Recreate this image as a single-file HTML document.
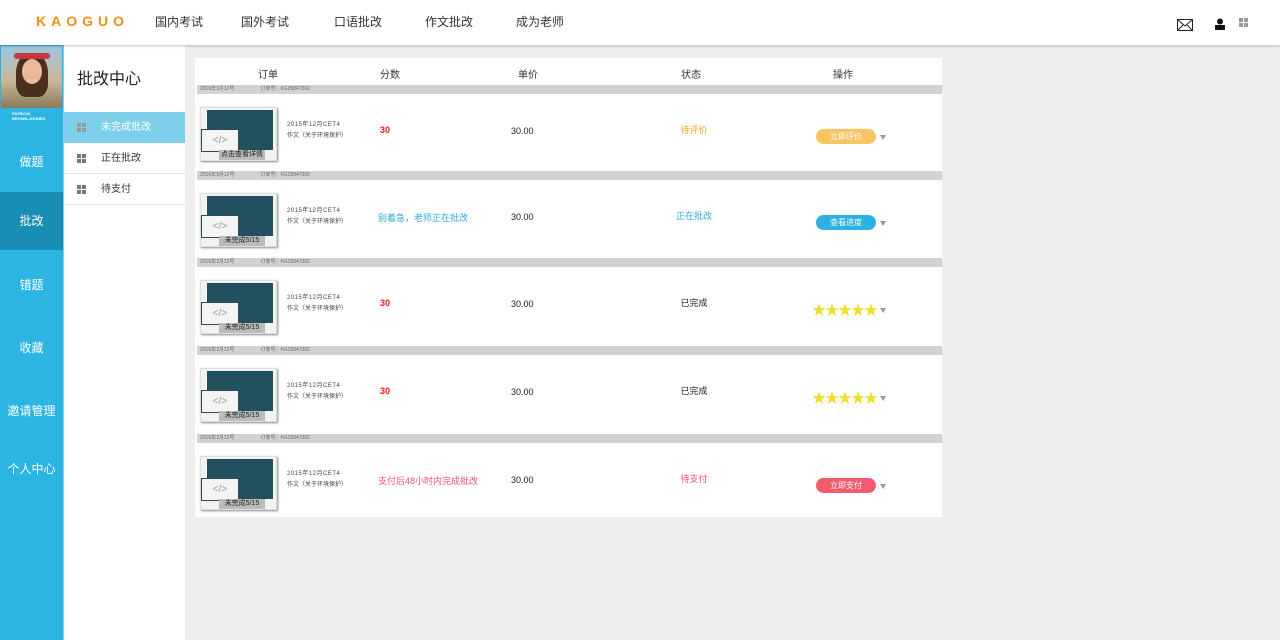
<!DOCTYPE html>
<html><head><meta charset="utf-8"><style>
*{margin:0;padding:0;box-sizing:border-box}
body{width:1280px;height:640px;overflow:hidden;background:#eeeeee;font-family:"Liberation Sans","Noto Sans CJK SC",sans-serif;position:relative;color:#333}
.a{position:absolute}
#hd{left:0;top:0;width:1280px;height:45px;background:#fff;box-shadow:0 1px 3px rgba(0,0,0,.25);z-index:5}
.nav{top:13px;font-size:12px;color:#333}
#sb{left:0;top:45px;width:64px;height:595px;background:#2cb5e3;border-right:1px solid #7fd0ec}
.si{left:0;width:63px;text-align:center;color:#fff;font-size:12px}
#sb2{left:64px;top:45px;width:121px;height:595px;background:#fff}
.s2{left:0;width:121px;height:31px;border-bottom:1px solid #e3e3e3;font-size:10px;color:#333;line-height:31px;padding-left:37px}
.gi{position:absolute;left:13px;top:11px;width:10px;height:10px}
.gi i{position:absolute;width:4px;height:4px;background:#999}
#tb{left:195px;top:58px;width:747px;height:459px;background:#fff}
.th{top:66px;font-size:10px;color:#333}
.strip{left:197px;width:745px;height:9px;background:#d2d2d2;font-size:5px;color:#666;line-height:9px}
.row{left:197px;width:745px;height:72px;background:#fff}
.thumb{position:absolute;left:3px;top:12px;width:77px;height:54px;background:#f2f2f2;box-shadow:1px 1px 2px #888;border:1px solid #ddd}
.scr{position:absolute;left:6px;top:2px;width:66px;height:40px;background:#23505f}
.code{position:absolute;left:0;top:21px;width:38px;height:23px;background:#f4f4f4;border:1px solid #2a4a55;color:#999;font-size:10px;text-align:center;line-height:21px}
.lbl{position:absolute;left:18px;top:42px;width:46px;height:10px;background:#bbb;font-size:7px;text-align:center;line-height:10px;color:#222}
.t1{position:absolute;left:90px;top:24px;font-size:6px;color:#444;letter-spacing:.5px}
.t2{position:absolute;left:90px;top:35px;font-size:6px;color:#444}
.sc{position:absolute;top:30px;font-size:9px}
.pr{position:absolute;left:314px;top:31px;font-size:9px;color:#222}
.st{position:absolute;top:28px;font-size:9px;width:80px;text-align:center;left:457px}
.btn{position:absolute;left:619px;top:34px;width:60px;height:15px;border-radius:8px;color:#fff;font-size:8px;text-align:center;line-height:15px}
.tri{position:absolute;left:683px;top:40px;width:0;height:0;border-left:3px solid transparent;border-right:3px solid transparent;border-top:5px solid #999}
.stars{position:absolute;left:615px;top:32px;color:#ede02a;font-size:14px;letter-spacing:-1px}
</style></head><body>
<div id="hd" class="a">
<div class="a" style="left:36px;top:13px;font-size:14px;font-weight:bold;color:#f0900e;letter-spacing:5px">KAOGUO</div>
<div class="a nav" style="left:155px">国内考试</div>
<div class="a nav" style="left:241px">国外考试</div>
<div class="a nav" style="left:334px">口语批改</div>
<div class="a nav" style="left:425px">作文批改</div>
<div class="a nav" style="left:516px">成为老师</div>
<svg class="a" style="left:1177px;top:19px" width="16" height="12"><rect x="0.5" y="0.5" width="15" height="11" fill="none" stroke="#222"/><path d="M1 1L8 7L15 1M1 11L6 6M15 11L10 6" stroke="#222" fill="none"/></svg>
<svg class="a" style="left:1214px;top:18px" width="12" height="12"><circle cx="6" cy="3.5" r="3" fill="#111"/><rect x="1" y="7" width="10" height="5" fill="#111"/></svg>
<div class="a" style="left:1239px;top:18px;width:10px;height:10px"><i class="a" style="left:0;top:0;width:4px;height:4px;background:#999"></i><i class="a" style="left:5px;top:0;width:4px;height:4px;background:#999"></i><i class="a" style="left:0;top:5px;width:4px;height:4px;background:#999"></i><i class="a" style="left:5px;top:5px;width:4px;height:4px;background:#999"></i></div>
</div>
<div id="sb" class="a">
<div class="a" style="left:1px;top:1px;width:61px;height:62px;background:linear-gradient(180deg,#9cc6e0 0%,#c9b89a 55%,#8c7a5a 100%)"></div>
<div class="a" style="left:16px;top:8px;width:32px;height:44px;border-radius:45% 45% 30% 30%;background:#4a2e1e"></div>
<div class="a" style="left:22px;top:14px;width:20px;height:25px;border-radius:50%;background:#e9b99a"></div>
<div class="a" style="left:14px;top:8px;width:36px;height:6px;border-radius:4px;background:#c23a3a"></div>
<div class="a" style="left:12px;top:66px;font-size:4px;color:#fff;font-weight:bold;line-height:5px">PATRICIA<br>BROWN-JOHNES</div>
<div class="a si" style="top:108px">做题</div>
<div class="a si" style="top:147px;height:58px;background:#1a8fb6;line-height:58px">批改</div>
<div class="a si" style="top:231px">错题</div>
<div class="a si" style="top:294px">收藏</div>
<div class="a si" style="top:357px">邀请管理</div>
<div class="a si" style="top:415px">个人中心</div>
</div>
<div id="sb2" class="a">
<div class="a" style="left:13px;top:20px;font-size:16px;color:#222">批改中心</div>
<div class="a s2" style="top:67px;background:#7ecfeb;color:#fff;border-bottom:none"><span class="gi"><i style="left:0;top:0"></i><i style="left:5px;top:0"></i><i style="left:0;top:5px"></i><i style="left:5px;top:5px"></i></span>未完成批改</div>
<div class="a s2" style="top:98px"><span class="gi"><i style="left:0;top:0;background:#777"></i><i style="left:5px;top:0;background:#777"></i><i style="left:0;top:5px;background:#777"></i><i style="left:5px;top:5px;background:#777"></i></span>正在批改</div>
<div class="a s2" style="top:129px"><span class="gi"><i style="left:0;top:0;background:#777"></i><i style="left:5px;top:0;background:#777"></i><i style="left:0;top:5px;background:#777"></i><i style="left:5px;top:5px;background:#777"></i></span>待支付</div>
</div>
<div id="tb" class="a"></div>
<div class="a th" style="left:258px">订单</div>
<div class="a th" style="left:380px">分数</div>
<div class="a th" style="left:518px">单价</div>
<div class="a th" style="left:681px">状态</div>
<div class="a th" style="left:833px">操作</div>

<div class="a strip" style="top:85px"><span style="margin-left:3px">2016年3月12号</span><span style="margin-left:26px">订单号：KG25847392</span></div>
<div class="a row" style="top:95px"><div class="thumb"><div class="scr"></div><div class="code">&lt;/&gt;</div><div class="lbl">点击查看详情</div></div><div class="t1">2015年12月CET4</div><div class="t2">作文（关于环境保护）</div><div class="sc" style="left:183px;color:#e81b1b;font-weight:bold">30</div><div class="pr">30.00</div><div class="st" style="color:#f5a623">待评价</div><div class="btn" style="background:#f9c561">立即评价</div><div class="tri"></div></div>

<div class="a strip" style="top:171px"><span style="margin-left:3px">2016年3月12号</span><span style="margin-left:26px">订单号：KG25847392</span></div>
<div class="a row" style="top:181px"><div class="thumb"><div class="scr"></div><div class="code">&lt;/&gt;</div><div class="lbl">未完成5/15</div></div><div class="t1">2015年12月CET4</div><div class="t2">作文（关于环境保护）</div><div class="sc" style="left:181px;color:#2aa9db">别着急，老师正在批改</div><div class="pr">30.00</div><div class="st" style="color:#2aa9db">正在批改</div><div class="btn" style="background:#2cb2e2">查看进度</div><div class="tri"></div></div>

<div class="a strip" style="top:258px"><span style="margin-left:3px">2016年3月12号</span><span style="margin-left:26px">订单号：KG25847392</span></div>
<div class="a row" style="top:268px"><div class="thumb"><div class="scr"></div><div class="code">&lt;/&gt;</div><div class="lbl">未完成5/15</div></div><div class="t1">2015年12月CET4</div><div class="t2">作文（关于环境保护）</div><div class="sc" style="left:183px;color:#e81b1b;font-weight:bold">30</div><div class="pr">30.00</div><div class="st" style="color:#222">已完成</div><div class="stars">★★★★★</div><div class="tri"></div></div>

<div class="a strip" style="top:346px"><span style="margin-left:3px">2016年3月12号</span><span style="margin-left:26px">订单号：KG25847392</span></div>
<div class="a row" style="top:356px"><div class="thumb"><div class="scr"></div><div class="code">&lt;/&gt;</div><div class="lbl">未完成5/15</div></div><div class="t1">2015年12月CET4</div><div class="t2">作文（关于环境保护）</div><div class="sc" style="left:183px;color:#e81b1b;font-weight:bold">30</div><div class="pr">30.00</div><div class="st" style="color:#222">已完成</div><div class="stars">★★★★★</div><div class="tri"></div></div>

<div class="a strip" style="top:434px"><span style="margin-left:3px">2016年3月12号</span><span style="margin-left:26px">订单号：KG25847392</span></div>
<div class="a row" style="top:444px"><div class="thumb"><div class="scr"></div><div class="code">&lt;/&gt;</div><div class="lbl">未完成5/15</div></div><div class="t1">2015年12月CET4</div><div class="t2">作文（关于环境保护）</div><div class="sc" style="left:181px;color:#f0506e">支付后48小时内完成批改</div><div class="pr">30.00</div><div class="st" style="color:#f0506e">待支付</div><div class="btn" style="background:#f25c6e">立即支付</div><div class="tri"></div></div>
</body></html>
